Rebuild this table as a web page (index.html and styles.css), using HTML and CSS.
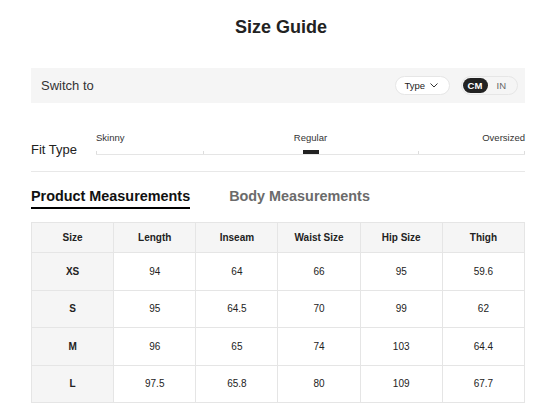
FILE: index.html
```html
<!DOCTYPE html>
<html lang="en">
<head>
<meta charset="utf-8">
<title>Size Guide</title>
<link rel="stylesheet" href="styles.css">
</head>
<body>
<div class="guide">
  <h1 class="title">Size Guide</h1>

  <div class="switch-bar">
    <span class="switch-label">Switch to</span>
    <div class="switch-controls">
      <button class="type-pill">Type
        <svg class="chev" width="8" height="5" viewBox="0 0 8 5"><path d="M0.5 0.5 L4 4 L7.5 0.5" fill="none" stroke="#333" stroke-width="1"/></svg>
      </button>
      <div class="unit-toggle">
        <span class="unit active">CM</span>
        <span class="unit">IN</span>
      </div>
    </div>
  </div>

  <div class="fit">
    <span class="fit-label">Fit Type</span>
    <div class="slider">
      <div class="slider-labels">
        <span class="sl-left">Skinny</span>
        <span class="sl-mid">Regular</span>
        <span class="sl-right">Oversized</span>
      </div>
      <div class="track">
        <i class="tick t0"></i>
        <i class="tick t25"></i>
        <i class="tick t50"></i>
        <i class="tick t75"></i>
        <i class="tick t100"></i>
        <b class="indicator"></b>
      </div>
    </div>
  </div>

  <div class="tabs">
    <span class="tab active">Product Measurements</span>
    <span class="tab">Body Measurements</span>
  </div>

  <table class="sizes">
    <thead>
      <tr><th>Size</th><th>Length</th><th>Inseam</th><th>Waist Size</th><th>Hip Size</th><th>Thigh</th></tr>
    </thead>
    <tbody>
      <tr><th>XS</th><td>94</td><td>64</td><td>66</td><td>95</td><td>59.6</td></tr>
      <tr><th>S</th><td>95</td><td>64.5</td><td>70</td><td>99</td><td>62</td></tr>
      <tr><th>M</th><td>96</td><td>65</td><td>74</td><td>103</td><td>64.4</td></tr>
      <tr><th>L</th><td>97.5</td><td>65.8</td><td>80</td><td>109</td><td>67.7</td></tr>
    </tbody>
  </table>
</div>
</body>
</html>
```

FILE: styles.css
```css
* { box-sizing: border-box; }
html, body { margin: 0; padding: 0; background: #fff; }
body {
  font-family: "Liberation Sans", Arial, sans-serif;
  color: #222;
}
.guide {
  width: 550px;
  padding: 16px 25px 0 31px;
}
.title {
  margin: 0;
  padding-left: 6px;
  font-size: 18px;
  line-height: 22px;
  font-weight: 700;
  text-align: center;
  color: #222;
}
.switch-bar {
  margin-top: 30px;
  height: 35px;
  background: #f5f5f5;
  display: flex;
  align-items: center;
  justify-content: space-between;
  padding: 0 7px 0 10px;
}
.switch-label {
  font-size: 13px;
  color: #333;
}
.switch-controls {
  display: flex;
  align-items: center;
  gap: 11px;
}
.type-pill {
  height: 19px;
  width: 55px;
  border: 1px solid #e6e6e6;
  background: #fff;
  border-radius: 10px;
  display: flex;
  align-items: center;
  padding: 0 0 0 9px;
  gap: 5px;
  font-family: inherit;
  font-size: 9.5px;
  color: #222;
}
.chev { display: block; }
.unit-toggle {
  height: 19px;
  border: 1px solid #e6e6e6;
  border-radius: 10px;
  display: flex;
  align-items: center;
  padding: 0 1px;
}
.unit {
  font-size: 9.5px;
  color: #666;
  padding: 0 10px 0 9px;
}
.unit.active {
  background: #222;
  color: #fff;
  font-weight: 700;
  height: 15px;
  line-height: 15px;
  width: 25px;
  padding: 0;
  text-align: center;
  border-radius: 8px;
}
.fit {
  margin-top: 29px;
  display: flex;
  align-items: flex-end;
  padding-bottom: 16px;
  border-bottom: 1px solid #e8e8e8;
}
.fit-label {
  width: 65px;
  font-size: 13px;
  line-height: 10px;
  color: #222;
}
.slider { flex: 1; }
.slider-labels {
  display: grid;
  grid-template-columns: 1fr auto 1fr;
  font-size: 9.5px;
  line-height: 12px;
  color: #333;
}
.sl-right { justify-self: end; }
.track {
  position: relative;
  margin-top: 6px;
  height: 5px;
  border-bottom: 1px solid #e5e5e5;
}
.tick {
  position: absolute;
  bottom: 0;
  width: 1px;
  height: 3px;
  background: #ddd;
}
.t0 { left: 0; }
.t25 { left: 25%; }
.t50 { left: 50%; }
.t75 { left: 75%; }
.t100 { right: 0; }
.indicator {
  position: absolute;
  bottom: 0;
  left: 50%;
  width: 16px;
  height: 4px;
  margin-left: -8px;
  background: #222;
}
.tabs {
  margin-top: 16px;
  display: flex;
  gap: 39px;
}
.tab {
  font-size: 14.4px;
  line-height: 17px;
  font-weight: 700;
  color: #6b6b6b;
  padding-bottom: 2px;
  border-bottom: 2px solid transparent;
}
.tab.active {
  color: #111;
  border-bottom-color: #000;
}
.sizes {
  margin-top: 13px;
  width: 100%;
  border-collapse: collapse;
  table-layout: fixed;
  font-size: 10px;
  color: #222;
}
.sizes th, .sizes td {
  border: 1px solid #e5e5e5;
  text-align: center;
  padding: 0;
}
.sizes thead tr { height: 30px; }
.sizes tbody tr { height: 37.5px; }
.sizes thead th { background: #f5f5f5; font-weight: 700; }
.sizes tbody th { background: #f5f5f5; font-weight: 700; }
.sizes td { font-weight: 400; }
```
